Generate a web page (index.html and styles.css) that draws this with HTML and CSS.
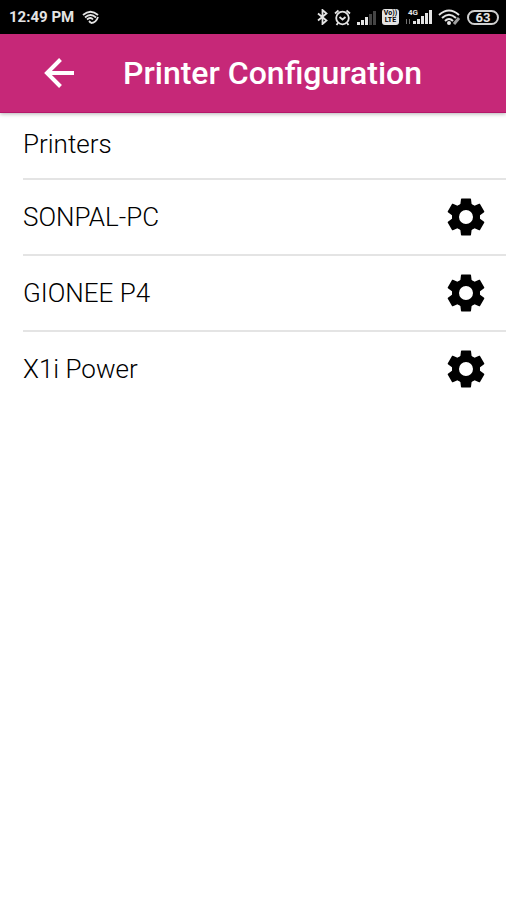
FILE: index.html
```html
<!DOCTYPE html>
<html lang="en">
<head>
  <meta charset="utf-8">
  <meta name="viewport" content="width=device-width, initial-scale=1">
  <title>Printer Configuration</title>
  <link rel="stylesheet" href="styles.css">
</head>
<body>
  <svg class="sprite" width="0" height="0" aria-hidden="true">
    <symbol id="gear" viewBox="-20 -20 40 40">
      <circle r="10.5" fill="none" stroke="currentColor" stroke-width="7"/>
      <g id="teeth" fill="currentColor">
        <path id="tooth" d="M-4.500-18.600H4.500L5-18 5.600-13 7-11H-7L-5.600-13-5-18Z"/>
        <use href="#tooth" transform="rotate(60)"/>
        <use href="#tooth" transform="rotate(120)"/>
        <use href="#tooth" transform="rotate(180)"/>
        <use href="#tooth" transform="rotate(240)"/>
        <use href="#tooth" transform="rotate(300)"/>
      </g>
    </symbol>
  </svg>

  <div class="status-bar">
    <span class="time">12:49 PM</span>
    <svg width="17" height="14" viewBox="0 0 17 14" fill="none" stroke="currentColor" stroke-width="1.8" aria-hidden="true">
      <path d="M1 5Q8.5-1.500 16 5"/>
      <path d="M3 7.500Q8.500 2.500 14 7.500"/>
      <path d="M5 9.500Q8.500 6.500 11 9.500"/>
      <path d="M9 13Q14 13 16 7M7 11l2 2"/>
    </svg>

    <div class="status-icons">
      <svg width="11" height="16" viewBox="0 0 11 16" fill="none" stroke="currentColor" stroke-width="1.8" aria-hidden="true">
        <path d="M1 4.500L9.500 11.500 5.500 15V1L9.500 4.500 1 11.500"/>
      </svg>
      <svg width="17" height="17" viewBox="0 0 17 17" fill="none" stroke="currentColor" stroke-width="1.8" aria-hidden="true">
        <circle cx="8.500" cy="9" r="6.300"/>
        <path d="M5.500 8L8.500 10.500 11.500 8M1 4.500L4.500 1.500M16 4.500L12.500 1.500M4 14L2.500 16M13 14L14.500 16"/>
      </svg>
      <svg width="19" height="15" viewBox="0 0 19 15" fill="currentColor" aria-hidden="true">
        <path d="M0 12h3v3H0zM4 10h3v5H4zM8 7h3v8H8z"/>
        <path d="M12 4h3v11h-3zM16 1h3v14h-3z" opacity=".3"/>
      </svg>
      <span class="volte"><span>Vo))</span><span>LTE</span></span>
      <span class="mobile">
        <span class="mobile-type">4G</span>
        <svg width="27" height="16" viewBox="0 0 27 16" fill="currentColor" aria-hidden="true">
          <path d="M1 10h1v5H1zM4 10h1v5H4z" opacity=".5"/>
          <path d="M8 12h3v3H8zM12 10h3v5h-3zM16 7h3v8h-3zM20 4h3v11h-3zM24 1h3v14h-3z"/>
        </svg>
      </span>
      <svg width="23" height="16" viewBox="0 0 23 16" fill="none" stroke="currentColor" stroke-width="2" aria-hidden="true">
        <path d="M1 6Q11-3 21 6M4 9Q11 2.500 18 9M7 12Q11 8 15 12"/>
        <circle cx="11" cy="14" r="1"/>
        <path d="M16 15l5-6" stroke-width="3" opacity=".7"/>
      </svg>
      <span class="battery">63</span>
    </div>
  </div>

  <header class="toolbar">
    <button class="back" type="button" aria-label="Back">
      <svg width="32" height="32" viewBox="0 0 32 32" fill="none" stroke="currentColor" stroke-width="4" aria-hidden="true">
        <path d="M31 16H4M17.500 2.500L4 16 17.500 29.500"/>
      </svg>
    </button>
    <h1>Printer Configuration</h1>
  </header>

  <main>
    <h2 class="list-header">Printers</h2>
    <ul class="printer-list">
      <li>
        <span>SONPAL-PC</span>
        <button class="settings" type="button" aria-label="Settings for SONPAL-PC"><svg width="40" height="40"><use href="#gear"/></svg></button>
      </li>
      <li>
        <span>GIONEE P4</span>
        <button class="settings" type="button" aria-label="Settings for GIONEE P4"><svg width="40" height="40"><use href="#gear"/></svg></button>
      </li>
      <li>
        <span>X1i Power</span>
        <button class="settings" type="button" aria-label="Settings for X1i Power"><svg width="40" height="40"><use href="#gear"/></svg></button>
      </li>
    </ul>
  </main>
</body>
</html>
```

FILE: styles.css
```css
* {
  box-sizing: border-box;
}

body {
  margin: 0;
  background-color: #fff;
  color: #000;
  font-family: Roboto, Arial, sans-serif;
}

svg {
  display: block;
}

.sprite {
  position: absolute;
}

button {
  padding: 0;
  border: none;
  background: none;
  color: inherit;
  cursor: pointer;
}

.status-bar {
  display: flex;
  align-items: center;
  gap: 8px;
  height: 34px;
  padding: 0 7px 0 9px;
  background-color: #000;
  color: #e4e4e4;
}

.time {
  font-size: 15px;
  font-weight: 700;
}

.status-icons {
  display: flex;
  align-items: center;
  gap: 6px;
  margin-left: auto;
}

.volte {
  display: flex;
  flex-direction: column;
  align-items: center;
  width: 17px;
  padding: 1px 0;
  border-radius: 3px;
  background-color: #e4e4e4;
  color: #000;
  font-size: 7px;
  font-weight: 700;
  line-height: 7px;
}

.mobile {
  position: relative;
}

.mobile-type {
  position: absolute;
  top: 0;
  left: 3px;
  font-size: 8px;
  font-weight: 700;
  line-height: 8px;
}

.battery {
  width: 32px;
  border: 2px solid #d0d0d0;
  border-radius: 8px;
  font-size: 13px;
  font-weight: 700;
  line-height: 11px;
  text-align: center;
}

.toolbar {
  display: flex;
  align-items: center;
  gap: 48px;
  height: 79px;
  padding: 0 43px;
  border-bottom: 1px solid #b5176a;
  background-color: #c62878;
  box-shadow: 0 1px 4px rgba(0, 0, 0, 0.3);
  color: #fff;
}

.toolbar h1 {
  margin: 0;
  font-size: 32px;
  font-weight: 500;
}

.list-header {
  margin: 0 0 0 23px;
  padding-bottom: 2px;
  border-bottom: 2px solid #e4e4e4;
  font-size: 26px;
  font-weight: 300;
  line-height: 63px;
}

.printer-list {
  margin: 0 0 0 23px;
  padding: 0;
  list-style: none;
  font-size: 26px;
  font-weight: 300;
}

.printer-list li {
  display: flex;
  align-items: center;
  justify-content: space-between;
  height: 76px;
  padding-right: 20px;
  border-bottom: 2px solid #e4e4e4;
}

.printer-list li:last-child {
  border-bottom-color: transparent;
}
```
